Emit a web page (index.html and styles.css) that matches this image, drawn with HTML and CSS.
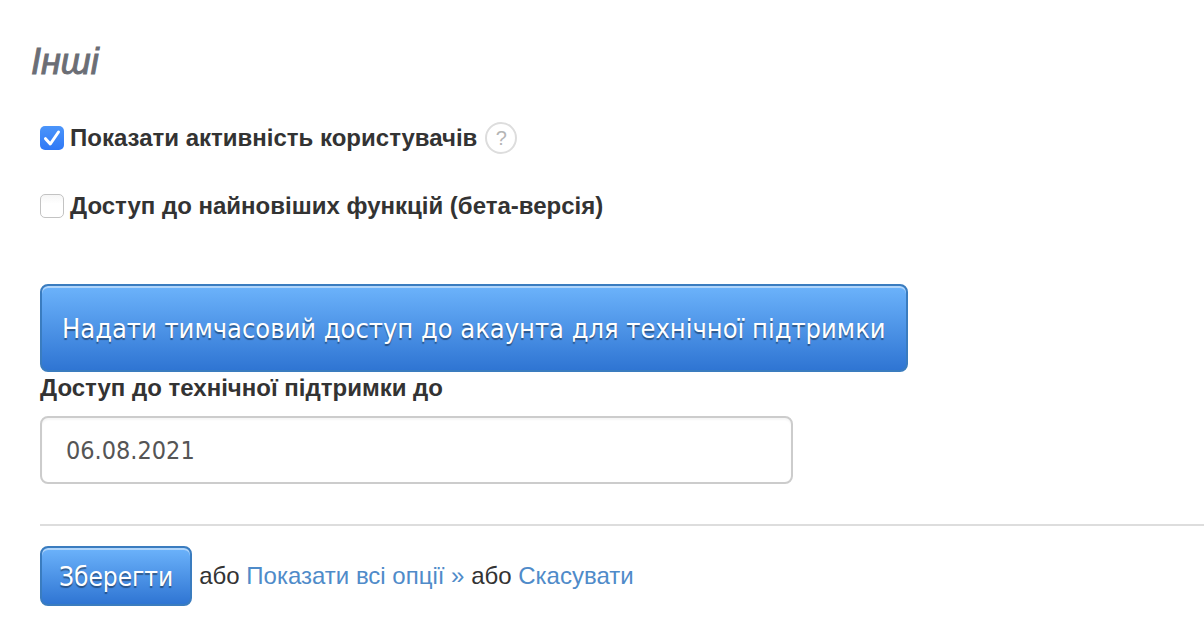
FILE: index.html
```html
<!DOCTYPE html>
<html lang="uk">
<head>
<meta charset="utf-8">
<title>Інші</title>
<link rel="stylesheet" href="styles.css">
</head>
<body>
<form class="settings">
  <h2 class="title">Інші</h2>
  <div class="option">
    <input class="check" type="checkbox" id="activity" checked>
    <label class="label" for="activity">Показати активність користувачів</label>
    <button class="help" type="button">?</button>
  </div>
  <div class="option">
    <input class="check" type="checkbox" id="beta">
    <label class="label" for="beta">Доступ до найновіших функцій (бета-версія)</label>
  </div>
  <div class="support">
    <button class="button button-large" type="button">Надати тимчасовий доступ до акаунта для технічної підтримки</button>
    <label class="label" for="until">Доступ до технічної підтримки до</label>
    <input class="field" type="text" id="until" value="06.08.2021">
  </div>
  <div class="actions">
    <button class="button" type="submit">Зберегти</button>
    <p class="links">або <a class="link" href="#all">Показати всі опції »</a> або <a class="link" href="#cancel">Скасувати</a></p>
  </div>
</form>
</body>
</html>
```
FILE: styles.css
```css
* {
  box-sizing: border-box;
}

body {
  margin: 0;
  background: #fff;
  color: #333;
  font: 24px/32px "Liberation Sans", Arial, sans-serif;
}

.settings {
  padding: 40px 0 34px 40px;
}

.title {
  margin: 0 0 38px -9px;
  color: #6b6e75;
  font: italic 500 36px/44px "Liberation Sans", Arial, sans-serif;
  -webkit-text-stroke: 1px #6b6e75;
}

.option {
  display: flex;
  align-items: center;
  margin-bottom: 36px;
}

.label {
  font-weight: bold;
}

.check {
  appearance: none;
  width: 24px;
  height: 24px;
  margin: 0 6px 0 0;
  border: 1px solid #c3c3c3;
  border-radius: 5px;
  background: linear-gradient(#f6f6f6, #fff 40%);
}

.check:checked {
  border: 0;
  background:
    url("data:image/svg+xml,%3Csvg xmlns='http://www.w3.org/2000/svg' viewBox='0 0 24 24'%3E%3Cpath d='M5.5 12.7 10.3 18 18.5 6' fill='none' stroke='white' stroke-width='3' stroke-linecap='round' stroke-linejoin='round'/%3E%3C/svg%3E"),
    linear-gradient(#4b95fa, #2f78f6);
}

.help {
  width: 32px;
  height: 32px;
  margin-left: 8px;
  padding: 0;
  border: 2px solid #ddd;
  border-radius: 50%;
  background: #fff;
  color: #b5b5b5;
  font: 20px/28px "Liberation Sans", Arial, sans-serif;
}

.support {
  display: flex;
  flex-direction: column;
  align-items: flex-start;
  padding: 26px 0 40px;
  border-bottom: 2px solid #ddd;
}

.button {
  padding: 13px 17px 11px;
  border: 2px solid #3a7cbf;
  border-radius: 8px;
  background: linear-gradient(#6cb3fb, #2f75d3);
  box-shadow: inset 0 2px #b0d5fb;
  color: #fff;
  font: 26px/32px "DejaVu Sans Condensed", "DejaVu Sans", sans-serif;
  text-shadow: 0 2px 1px rgba(0, 0, 0, 0.4);
}

.button-large {
  padding: 27px 20px 25px;
  font-size: 27px;
}

.field {
  width: 753px;
  max-width: 100%;
  margin-top: 12px;
  padding: 17px 24px 15px;
  border: 2px solid #ccc;
  border-radius: 8px;
  background: #fff;
  box-shadow: inset 0 2px 2px rgba(0, 0, 0, 0.04);
  color: #555;
  font: 25px/32px "DejaVu Sans Condensed", "DejaVu Sans", sans-serif;
}

.actions {
  display: flex;
  align-items: center;
  gap: 7px;
  padding-top: 20px;
}

.links {
  margin: 0;
}

.link {
  color: #4f8bc9;
  text-decoration: none;
}
```
